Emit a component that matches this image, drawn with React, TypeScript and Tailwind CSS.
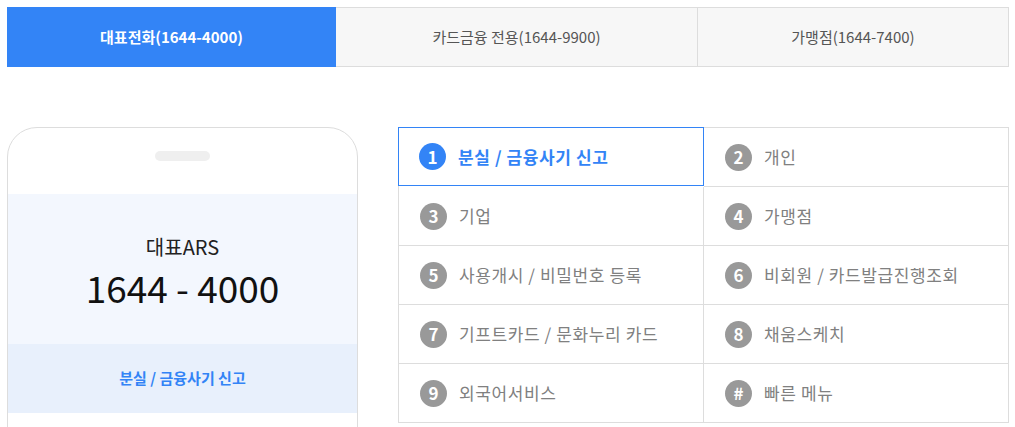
import React from "react";

const items: { n: string; label: string }[] = [
  { n: "1", label: "분실 / 금융사기 신고" },
  { n: "2", label: "개인" },
  { n: "3", label: "기업" },
  { n: "4", label: "가맹점" },
  { n: "5", label: "사용개시 / 비밀번호 등록" },
  { n: "6", label: "비회원 / 카드발급진행조회" },
  { n: "7", label: "기프트카드 / 문화누리 카드" },
  { n: "8", label: "채움스케치" },
  { n: "9", label: "외국어서비스" },
  { n: "#", label: "빠른 메뉴" },
];

export default function App() {
  return (
    <div
      className="w-[1015px] h-[427px] overflow-hidden bg-white"
      style={{ fontFamily: '"Noto Sans CJK KR", "Noto Sans", sans-serif' }}
    >
      <div className="flex ml-[7px] mt-[7px] w-[1002px] h-[60px]">
        <div className="w-[329px] flex items-center justify-center bg-[#3384f6] text-white text-[15px] font-bold">
          대표전화(1644-4000)
        </div>
        <div className="w-[362px] flex items-center justify-center bg-[#f7f7f7] border-y border-r border-[#dddddd] text-[#555] text-[15px]">
          카드금융 전용(1644-9900)
        </div>
        <div className="flex-1 flex items-center justify-center bg-[#f7f7f7] border-y border-r border-[#dddddd] text-[#555] text-[15px]">
          가맹점(1644-7400)
        </div>
      </div>

      <div className="flex mt-[60px] ml-[7px]">
        <div className="w-[351px] h-[320px] border border-[#dddddd] rounded-t-[30px] flex flex-col">
          <div className="h-[66px] flex justify-center pt-[23px]">
            <div className="w-[55px] h-[10px] rounded-full bg-[#efefef]" />
          </div>
          <div className="h-[150px] bg-[#f3f7fe] flex flex-col items-center justify-center pt-[4px]">
            <div className="text-[20px] leading-[24px] text-[#222]">대표ARS</div>
            <div className="text-[37px] leading-[40px] text-[#111] mt-[8px]">1644 - 4000</div>
          </div>
          <div className="h-[69px] bg-[#e8f0fc] flex items-center justify-center text-[15px] font-bold text-[#3384f6]">
            분실 / 금융사기 신고
          </div>
        </div>

        <div className="ml-[40px] w-[611px] grid grid-cols-2 border-t border-l border-[#dddddd] self-start">
          {items.map((it, i) => {
            const active = i === 0;
            return (
              <div
                key={it.n}
                className={
                  active
                    ? "h-[59px] flex items-center pl-[20px] border border-[#3384f6] -mt-px -ml-px relative"
                    : "h-[59px] flex items-center pl-[21px] border-r border-b border-[#dddddd]"
                }
              >
                <span
                  className={
                    (active ? "bg-[#3384f6]" : "bg-[#999999]") +
                    " w-[27px] h-[27px] rounded-full flex items-center justify-center text-white text-[17px] font-bold"
                  }
                >
                  {it.n}
                </span>
                <span
                  className={
                    active
                      ? "ml-[12px] text-[17px] font-bold text-[#3384f6] tracking-[0.6px]"
                      : "ml-[12px] text-[17px] text-[#808080] tracking-[0.6px]"
                  }
                >
                  {it.label}
                </span>
              </div>
            );
          })}
        </div>
      </div>
    </div>
  );
}
